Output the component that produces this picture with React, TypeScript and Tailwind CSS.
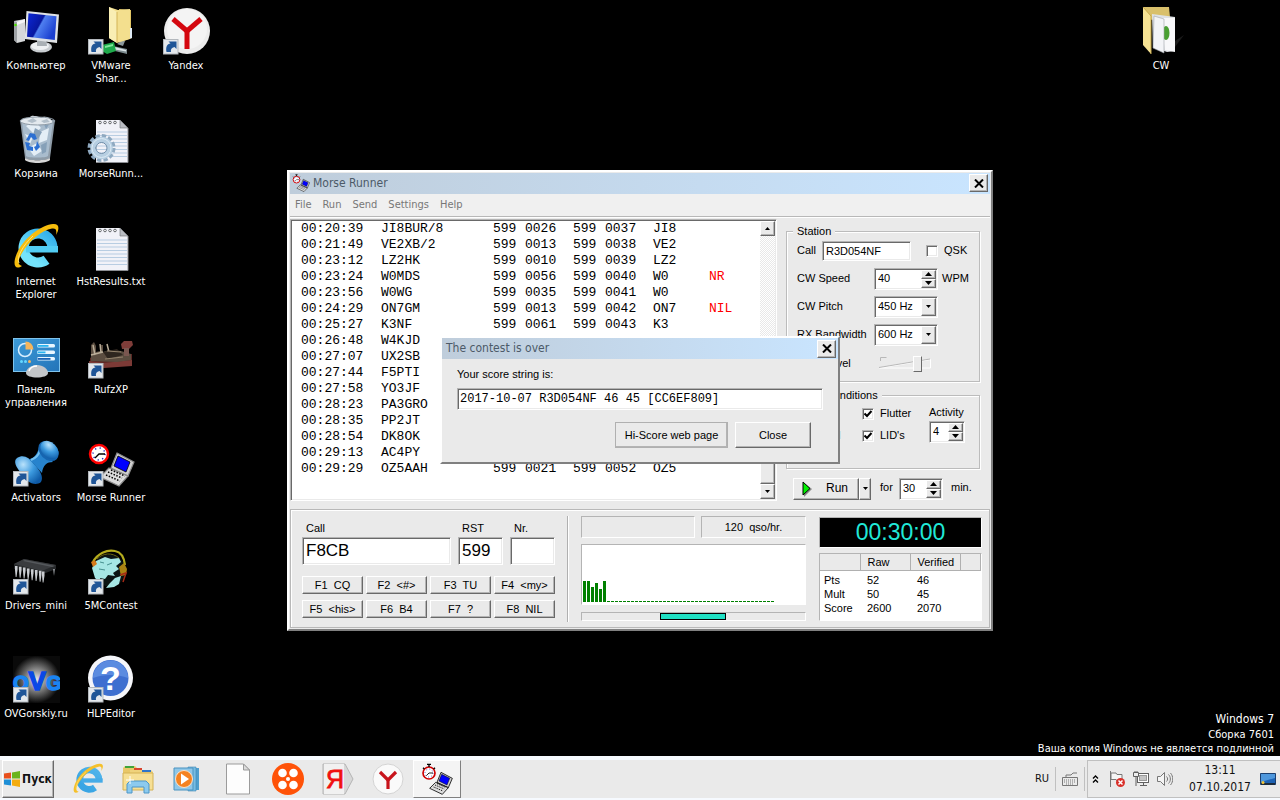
import React, { useState } from 'react';

const uiFont = "font-['DejaVu_Sans_Condensed','Noto_Sans',sans-serif]";
const sans = "font-['Liberation_Sans',Arial,sans-serif]";
const mono = "font-['Liberation_Mono','Courier_New',monospace]";

const raised = 'border border-t-white border-l-white border-r-[#696969] border-b-[#696969] bg-[#eaeaea] shadow-[inset_-1px_-1px_0_#b4b4b4]';
const sunken = 'border border-t-[#b4b4b4] border-l-[#b4b4b4] border-r-white border-b-white';
const field = `${sunken} bg-white shadow-[inset_1px_1px_0_#696969,inset_-1px_-1px_0_#eaeaea]`;

/* ---------- desktop icons ---------- */

const Shortcut = () => (
    <g>
        <rect x="1.500" y="32.500" width="14.500" height="14.500" fill="#e4e8ec" stroke="#b3b8bd" />
        <path d="M4.500 45c-1-5 .5-8 4-8.500L6.500 34.500h8v7.500l-2-2c-3 .6-4 2.500-3.500 5z" fill="#1f5597" />
    </g>
);

const ComputerIcon = () => (
    <svg viewBox="0 0 48 48" className="h-12 w-12">
        <defs>
            <linearGradient id="scr" x1="0" y1="0" x2="1" y2="0.5">
                <stop offset="0" stopColor="#0d28d8" /><stop offset="0.5" stopColor="#0717a0" />
                <stop offset="0.55" stopColor="#4f7ff0" /><stop offset="1" stopColor="#1b3fd0" />
            </linearGradient>
        </defs>
        <path d="M2 14l11-2v22l-8 2-3-3z" fill="#d6d8da" />
        <path d="M2 14l3 1v21l-3-3z" fill="#9ea2a6" />
        <path d="M5 15l8-3v3l-8 3z" fill="#f6f6f6" />
        <circle cx="3.500" cy="18" r="1.300" fill="#4be000" />
        <ellipse cx="29" cy="40" rx="11" ry="5.500" fill="#c9cdd1" />
        <ellipse cx="28" cy="39" rx="9" ry="4" fill="#eef0f2" />
        <path d="M25 32h9l1 7h-10z" fill="#aab0b5" />
        <path d="M14.500 4L47 7.500 45 36 12.700 32z" fill="#dfe2e5" />
        <path d="M16.500 6.300L44.500 9.300 42.800 33 15 29.800z" fill="url(#scr)" />
    </svg>
);

const NetFolderIcon = () => (
    <svg viewBox="0 0 48 48" className="h-12 w-12">
        <path d="M30 37l4-3h4l-2 5z" fill="#8b979b" />
        <path d="M26 39l14 3v5l-12-3z" fill="#7d8b8f" />
        <path d="M28 40l11 3v1.500l-11-2z" fill="#dbe4e7" />
        <path d="M15 38l12-3 2 9-9 3-5-3z" fill="#1faa4c" />
        <path d="M18 39l8-2v2l-8 2z" fill="#82e89c" />
        <path d="M32 2l12 1v19l1 2v7l-9 3z" fill="#e3c765" />
        <path d="M42 21h3v10l-3 1z" fill="#dfeaf5" />
        <path d="M22 0l9 3 12-1v30l-13 4-8-5z" fill="#f3df8e" />
        <path d="M22 0l8 5v31l-8-5z" fill="#f9eeb4" />
        <path d="M30 5v31" stroke="#d3b457" />
        <Shortcut />
    </svg>
);

const YandexIcon = () => (
    <svg viewBox="0 0 48 48" className="h-12 w-12">
        <circle cx="25" cy="24" r="23" fill="#ececec" />
        <circle cx="25" cy="22" r="20" fill="#f4f4f4" />
        <g stroke="#d4070f" strokeWidth="5">
            <line x1="11" y1="12" x2="25" y2="24" />
            <line x1="39" y1="12" x2="25" y2="24" />
            <line x1="25" y1="22" x2="25" y2="42" />
        </g>
        <Shortcut />
    </svg>
);

const BinIcon = () => (
    <svg viewBox="0 0 48 48" className="h-12 w-12">
        <path d="M8 5h35l-5 38c-1 3-24 3-25 0z" fill="#8f9ca8" />
        <path d="M10 7h31l-5 34c-2 2-20 2-22 0z" fill="#a9bccd" />
        <path d="M14 11l9-5 6 7-7 6zM28 17l9-4-2 12-8 3zM16 33l9-5 5 8-8 5zM13 19l8 3-3 7z" fill="#e4eef6" />
        <path d="M23 13l7 4-4 7-5-4zM29 30l6-3-1 10-4 2zM31 7l7 1-4 6z" fill="#86a0b8" />
        <path d="M9 6c2-5 7-2 9-4s4-1 6-1 3 2 7 1 7 1 9 4-5 4-15 4S8 9 9 6z" fill="#e3e9ee" />
        <path d="M15 6l6-3 4 3-5 2zM29 6l6-2 3 3-6 1z" fill="#b2bfca" />
        <ellipse cx="25.500" cy="6" rx="17.500" ry="4" fill="none" stroke="#8d99a4" />
        <path d="M14 25l4-7 5 1 2 5-3 1-3-3-2 4zM13 27l5 1-1 3 4 1v4l-6-1zM25 26l3 6-4 4-2-4 2-1z" fill="#2b6fd2" />
        <path d="M13 43c4 3 21 3 25 0v2c-4 4-21 4-25 0z" fill="#d6d6d6" />
    </svg>
);

const Sheet = () => (
    <g>
        <path d="M9 5h24l8 8v35H9z" fill="#f1f2f8" />
        <path d="M9 47.500h32V13" fill="none" stroke="#8b8d92" />
        <path d="M33 5v8h8z" fill="#b9bcc2" stroke="#6d7074" strokeWidth="0.600" />
        {[17, 20.5, 24, 27.5, 31, 34.5, 38, 41.5].map(y => <line key={y} x1="10" x2="40" y1={y} y2={y} stroke="#a9c3dc" strokeWidth="0.800" />)}
        {[13, 18, 23, 28].map(x => <circle key={x} cx={x} cy="7.500" r="1.300" fill="#fff" stroke="#44474b" strokeWidth="0.800" />)}
    </g>
);

const TextIcon = () => <svg viewBox="0 0 48 48" className="h-12 w-12"><Sheet /></svg>;

const ConfigIcon = () => (
    <svg viewBox="0 0 48 48" className="h-12 w-12">
        <Sheet />
        <circle cx="14.500" cy="33" r="12" fill="none" stroke="#8fa9c0" strokeWidth="4" strokeDasharray="4.200 2.080" />
        <circle cx="14.500" cy="33" r="8.500" fill="none" stroke="#b7cfe2" strokeWidth="5.500" />
        <circle cx="14.500" cy="33" r="5.500" fill="none" stroke="#6f8da8" />
        <circle cx="14.500" cy="33" r="9.500" fill="none" stroke="#dceaf4" />
    </svg>
);

const IeLogo = ({ size, light }: { size: string; light?: boolean }) => (
    <svg viewBox="0 0 48 48" className={size}>
        <defs>
            <linearGradient id={light ? 'ieb' : 'iea'} x1="0" y1="0" x2="0.300" y2="1">
                <stop offset="0" stopColor={light ? '#4fb3ea' : '#35b1ea'} />
                <stop offset="1" stopColor={light ? '#3aa5e4' : '#74e4fc'} />
            </linearGradient>
        </defs>
        <circle cx="26" cy="25" r="14.500" fill="none" stroke={`url(#${light ? 'ieb' : 'iea'})`} strokeWidth="10" strokeDasharray="77.500 13.600" transform="rotate(54 26 25)" />
        <rect x="14" y="23" width="32" height="6.500" fill={light ? '#45abe7' : '#52cdf4'} />
        <path d="M10 43C2 48 0 40 6 28 14 13 30 2 41 1c6-.5 7 4 3 11 1-5 0-7-4-6.500C30 7 17 18 10 30c-4 7-5 12 0 13z" fill={light ? '#f5c02a' : '#f7bd0c'} />
        <path d="M7 40C4 35 11 22 21 13" fill="none" stroke="#ffe478" strokeWidth="1" />
    </svg>
);

const PanelIcon = () => (
    <svg viewBox="0 0 48 48" className="h-12 w-12">
        <defs>
            <linearGradient id="pnl" x1="0" y1="0" x2="1" y2="1">
                <stop offset="0" stopColor="#3c9bd9" /><stop offset="1" stopColor="#2374b8" />
            </linearGradient>
        </defs>
        <rect x="1.500" y="7.500" width="46" height="33" fill="url(#pnl)" stroke="#7fc3ec" />
        <circle cx="13" cy="19" r="6.500" fill="none" stroke="#d8efff" strokeWidth="1.500" />
        <path d="M13.500 18.500V10.500a8 8 0 018 8z" fill="#f5b55c" />
        <g>
            <rect x="25" y="13" width="18" height="3.600" rx="1.500" fill="#e8f6ff" /><rect x="25.500" y="14" width="11" height="1.800" fill="#29b4f0" />
            <rect x="25" y="19.500" width="18" height="3.600" rx="1.500" fill="#e8f6ff" /><rect x="25.500" y="20.500" width="8" height="1.800" fill="#29b4f0" />
            <rect x="25" y="26" width="18" height="3.600" rx="1.500" fill="#e8f6ff" /><rect x="25.500" y="27" width="13" height="1.800" fill="#1a63b5" />
        </g>
        <circle cx="9.500" cy="30.500" r="1.500" fill="#65d8ff" /><circle cx="13.500" cy="30.500" r="1.500" fill="#65d8ff" /><circle cx="17.500" cy="30.500" r="1.500" fill="#f5b55c" />
        <path d="M14 42c0-4 5-8 11-8s11 4 11 8c0 6-22 6-22 0z" fill="#c3c6c9" />
        <path d="M17 40c1-3 4-5 8-5" fill="none" stroke="#fff" strokeWidth="1.500" />
    </svg>
);

const KeyerIcon = () => (
    <svg viewBox="0 0 48 48" className="h-12 w-12">
        <path d="M3 27l6-4h36v9l-28 3L3 32z" fill="#5b2724" />
        <path d="M2 30l15 2 28-3v6l-28 2-15-2z" fill="#7c3a36" />
        <path d="M4 14l3-3 2 4v6l4-1v-6h3v7l6-2 12 1 10 3v6l-14 2-26-1z" fill="#5b4d40" />
        <path d="M6 14l2 10M13 13l1 9M20 13l2 8M4 24l12-3" stroke="#b9ad98" strokeWidth="1.500" fill="none" />
        <path d="M16 21l14-3 6 6-15 4z" fill="#2e261f" />
        <path d="M20 20l14 1M18 28l18-2" stroke="#94846d" />
        <path d="M34 13l3-3h8l1 4-4 4h-7z" fill="#7f3d39" />
        <path d="M37 17h5v8h-5z" fill="#7a5750" />
        <Shortcut />
    </svg>
);

const PinIcon = () => (
    <svg viewBox="0 0 48 48" className="h-12 w-12">
        <defs>
            <radialGradient id="pin" cx="0.300" cy="0.300" r="0.800">
                <stop offset="0" stopColor="#b9e2fb" /><stop offset="0.500" stopColor="#3d9be0" /><stop offset="1" stopColor="#0e5aa6" />
            </radialGradient>
        </defs>
        <path d="M5 19c6-4 12-1 17 6 6 6 10 13 7 18-6 5-15 0-20-9C4 28 1 22 5 19z" fill="url(#pin)" />
        <path d="M17 20c5 0 9-6 10-12l14 15c-6 0-10 3-11 11z" fill="#2783cd" />
        <path d="M19 21c5-2 8-5 9-10" stroke="#72bff0" strokeWidth="2" fill="none" />
        <ellipse cx="36.500" cy="12" rx="11.500" ry="8.500" transform="rotate(45 36.500 12)" fill="#1665b0" />
        <ellipse cx="37.500" cy="11" rx="10.500" ry="7.500" transform="rotate(45 37.500 11)" fill="url(#pin)" />
        <Shortcut />
    </svg>
);

const RunnerArt = ({ black }: { black?: boolean }) => (
    <g>
        <path d="M30 14l17 9-6 14-17-8z" fill="#cfcfcf" stroke={black ? '#000' : '#8a8a8a'} strokeWidth="1.200" />
        <path d="M31 17l12 6-4 10-12-6z" fill="#0000ff" stroke="#000" strokeWidth="0.800" />
        <path d="M22 29l19 8-9 10-19-9z" fill="#dcdcdc" stroke={black ? '#000' : '#8a8a8a'} strokeWidth="1.200" />
        <path d="M21 33l14 6M19 36l14 6M24 31l14 6" stroke="#000" strokeWidth="1.500" strokeDasharray="1.500 1.500" />
        <circle cx="12" cy="15" r="9" fill="#fff" stroke={black ? '#d00000' : '#ff0000'} strokeWidth="2.500" />
        <circle cx="12" cy="15" r="6" fill="none" stroke="#3030c0" strokeWidth="1.500" strokeDasharray="1.200 3.500" />
        <path d="M18 15h-6l-4 4" stroke="#000" strokeWidth="1.300" fill="none" />
        {black && <path d="M12 6V2M9 2h6M3 7l2 2M21 7l-2 2" stroke="#000" strokeWidth="2" fill="none" />}
    </g>
);

const RunnerIcon = () => <svg viewBox="0 0 48 48" className="h-12 w-12"><RunnerArt /><Shortcut /></svg>;

const ChipIcon = () => (
    <svg viewBox="0 0 48 48" className="h-12 w-12">
        <path d="M12 12l32 6v4L31 27 2 22v-5z" fill="#26282a" />
        <path d="M12 12l32 6-14 6L2 17z" fill="#3a3c3f" />
        <path d="M13 13l30 6-3 1-29-6z" fill="#55585c" />
        {[3, 7, 11, 15, 19, 23, 27, 30].map((x, i) => (
            <path key={x} d={`M${x} ${19 + i * 0.8}h2.500v4l-1 7h-.8l-.7-7z`} fill="#c9ccd0" />
        ))}
        <path d="M41 22h2l-1 7z" fill="#8e9195" />
        <Shortcut />
    </svg>
);

const GlobeIcon = () => (
    <svg viewBox="0 0 48 48" className="h-12 w-12">
        <path d="M7 20c1-8 9-13 17-12 9 1 15 7 14 17-1 9-7 14-13 15-9 1-18-8-18-20z" fill="#0b1414" />
        <path d="M5 21l4-7 9-4 6 2 8-1 2 4-5 4 3 3-6 4 2 3-7-1-3 4-5-1 2 6-7-6zM28 31l6-2-2 8-5 3-8 1 4-5z" fill="#a6e6e4" />
        <path d="M13 15l4 1M20 18l5-2M12 22l6 1" stroke="#47908f" />
        <path d="M6 15C10 7 20 2 28 4c6 1 9 6 10 14" fill="none" stroke="#b4ab1d" strokeWidth="2.200" />
        <path d="M10 12C16 6 25 5 32 11" fill="none" stroke="#6b6614" strokeWidth="1" />
        <path d="M4 15l4-2 2 4-4 3z" fill="#d67a1c" />
        <path d="M32 20l5-4 3 6-1 6-5 1z" fill="#a98213" />
        <path d="M33 28l6-2-3 9" stroke="#a62a16" strokeWidth="1.500" fill="none" />
        <Shortcut />
    </svg>
);

const OvgIcon = () => (
    <svg viewBox="0 0 48 48" className="h-12 w-12">
        <defs>
            <radialGradient id="glow"><stop offset="0" stopColor="#e8e8e8" /><stop offset="1" stopColor="#0a0a0a" /></radialGradient>
        </defs>
        <rect x="1" y="1" width="47" height="47" fill="url(#glow)" />
        <text x="1" y="35" fontSize="20" fill="#1a84f2" stroke="#1a84f2" strokeWidth="1.500" className="font-['Liberation_Sans',sans-serif] font-bold">
            O<tspan fontSize="26" fill="#0a48e6" stroke="#0a48e6">V</tspan>G
        </text>
        <Shortcut />
    </svg>
);

const HelpIcon = () => (
    <svg viewBox="0 0 48 48" className="h-12 w-12">
        <circle cx="23.500" cy="23" r="22.500" fill="#f5f6fa" />
        <circle cx="23.500" cy="23" r="18" fill="#3e6fd0" />
        <path d="M6 23a17.500 17.500 0 0135 0c-10-4-25-4-35 0z" fill="#5b8be0" />
        <text x="23.500" y="35" textAnchor="middle" fontSize="34" fill="#fff" className="font-['Liberation_Sans',sans-serif] font-bold">?</text>
        <Shortcut />
    </svg>
);

const CwFolderIcon = () => (
    <svg viewBox="-5 0 48 48" className="h-12 w-12">
        <path d="M33 34l9-6-9 12z" fill="#1b1b1b" />
        <path d="M1 0h26l1 10-20 3z" fill="#d9c06b" />
        <path d="M10 7l23 3v34l-8 1-14-5z" fill="#dfe2e6" />
        <path d="M18 11l15 0v34l-10-2z" fill="#f8f8fa" />
        <ellipse cx="24" cy="26" rx="3.500" ry="7" fill="#4aa032" />
        <path d="M12 9l10 3v34l-11-5z" fill="#f3f4f7" stroke="#9da2a8" strokeWidth="0.600" />
        <path d="M1 0l8 9v38l-8-9z" fill="#f7e394" />
        <path d="M1 0l8 9v38" fill="none" stroke="#c7a94c" />
    </svg>
);

interface DesktopItem { label: string; icon: React.ReactNode }

const columns: DesktopItem[][] = [
    [
        { label: 'Компьютер', icon: <ComputerIcon /> },
        { label: 'Корзина', icon: <BinIcon /> },
        { label: 'Internet Explorer', icon: <IeLogo size="h-12 w-12" /> },
        { label: 'Панель управления', icon: <PanelIcon /> },
        { label: 'Activators', icon: <PinIcon /> },
        { label: 'Drivers_mini', icon: <ChipIcon /> },
        { label: 'OVGorskiy.ru', icon: <OvgIcon /> },
    ],
    [
        { label: 'VMware Shar...', icon: <NetFolderIcon /> },
        { label: 'MorseRunn...', icon: <ConfigIcon /> },
        { label: 'HstResults.txt', icon: <TextIcon /> },
        { label: 'RufzXP', icon: <KeyerIcon /> },
        { label: 'Morse Runner', icon: <RunnerIcon /> },
        { label: '5MContest', icon: <GlobeIcon /> },
        { label: 'HLPEditor', icon: <HelpIcon /> },
    ],
    [{ label: 'Yandex', icon: <YandexIcon /> }],
];

const DesktopIcon = ({ label, icon }: DesktopItem) => (
    <button className="flex h-[108px] w-[72px] flex-col items-center gap-1 text-center text-[11px] leading-[13px] text-white last:h-auto">
        {icon}
        <span>{label}</span>
    </button>
);

/* ---------- classic controls ---------- */

const CloseButton = ({ onClick }: { onClick?: () => void }) => (
    <button aria-label="Close window" onClick={onClick} className={`flex h-[18px] w-[19px] items-center justify-center ${raised}`}>
        <svg viewBox="0 0 10 9" className="h-[9px] w-[10px]" stroke="#000" strokeWidth="2"><path d="M1 0.500l8 8M9 0.500l-8 8" /></svg>
    </button>
);

const Arrow = ({ up }: { up?: boolean }) => (
    <svg viewBox="0 0 7 4" className="h-1 w-[7px]"><path d={up ? 'M0 4h7L3.500 0z' : 'M0 0h7L3.500 4z'} /></svg>
);

const SmallArrow = ({ up }: { up?: boolean }) => (
    <svg viewBox="0 0 5 3" className="h-[3px] w-[5px]"><path d={up ? 'M0 3h5L2.500 0z' : 'M0 0h5L2.500 3z'} /></svg>
);

const Spin = ({ id, value, width }: { id: string; value: string; width: string }) => (
    <div className={`flex h-[22px] p-px ${width} ${field}`}>
        <input id={id} defaultValue={value} className="w-0 flex-1 bg-transparent pl-0.5 outline-none" />
        <div className="flex w-[15px] flex-col">
            <button aria-label="Increase" className={`flex flex-1 items-center justify-center ${raised}`}><Arrow up /></button>
            <button aria-label="Decrease" className={`flex flex-1 items-center justify-center ${raised}`}><Arrow /></button>
        </div>
    </div>
);

const Combo = ({ id, value }: { id: string; value: string }) => (
    <div className={`relative h-[22px] w-16 p-px ${field}`}>
        <select id={id} className="h-full w-full appearance-none bg-transparent pl-0.5 outline-none">
            <option>{value}</option>
        </select>
        <span className={`pointer-events-none absolute inset-y-px right-px flex w-[15px] items-center justify-center ${raised}`}><SmallArrow /></span>
    </div>
);

const Check = ({ label, checked }: { label: string; checked?: boolean }) => {
    const [on, setOn] = useState(!!checked);
    return (
        <label className="flex h-[22px] items-center gap-1.5">
            <span className={`relative flex h-3 w-3 items-center justify-center ${field}`}>
                <input type="checkbox" checked={on} onChange={() => setOn(!on)} className="absolute inset-0 appearance-none" />
                {on && <svg viewBox="0 0 8 8" className="h-2 w-2" fill="none" stroke="#000" strokeWidth="2"><path d="M0.500 3.500l2.500 2.500 4.500-5" /></svg>}
            </span>
            {label}
        </label>
    );
};

const Group = ({ title, className, children }: { title: string; className: string; children: React.ReactNode }) => (
    <fieldset className={`border border-[#bcbcbc] px-2.5 shadow-[1px_1px_0_#fff,inset_1px_1px_0_#fff] ${className}`}>
        <legend className="-ml-1 bg-[#eaeaea] px-1 leading-[13px]">{title}</legend>
        {children}
    </fieldset>
);

/* ---------- Morse Runner window ---------- */

const log: string[][] = [
    ['00:20:39', 'JI8BUR/8', '599', '0026', '599', '0037', 'JI8', ''],
    ['00:21:49', 'VE2XB/2', '599', '0013', '599', '0038', 'VE2', ''],
    ['00:23:12', 'LZ2HK', '599', '0010', '599', '0039', 'LZ2', ''],
    ['00:23:24', 'W0MDS', '599', '0056', '599', '0040', 'W0', 'NR'],
    ['00:23:56', 'W0WG', '599', '0035', '599', '0041', 'W0', ''],
    ['00:24:29', 'ON7GM', '599', '0013', '599', '0042', 'ON7', 'NIL'],
    ['00:25:27', 'K3NF', '599', '0061', '599', '0043', 'K3', ''],
    ['00:26:48', 'W4KJD', '', '', '', '', '', ''],
    ['00:27:07', 'UX2SB', '', '', '', '', '', ''],
    ['00:27:44', 'F5PTI', '', '', '', '', '', ''],
    ['00:27:58', 'YO3JF', '', '', '', '', '', ''],
    ['00:28:23', 'PA3GRO', '', '', '', '', '', ''],
    ['00:28:35', 'PP2JT', '', '', '', '', '', ''],
    ['00:28:54', 'DK8OK', '', '', '', '', '', ''],
    ['00:29:13', 'AC4PY', '', '', '', '', '', ''],
    ['00:29:29', 'OZ5AAH', '599', '0021', '599', '0052', 'OZ5', ''],
];

const LogView = () => (
    <div className={`flex w-[487px] p-px ${field}`}>
        <div className={`flex-1 overflow-hidden pl-[9px] ${mono}`}>
            <table className="w-full table-fixed text-[13px] leading-4 text-black">
                <colgroup>
                    <col className="w-20" /><col className="w-28" /><col className="w-8" /><col className="w-12" />
                    <col className="w-8" /><col className="w-12" /><col className="w-14" /><col />
                </colgroup>
                <tbody>
                    {log.map(row => (
                        <tr key={row[0]} className="h-4">
                            {row.map((cell, i) => <td key={i} className={i === 7 ? 'p-0 text-[#ff0000]' : 'p-0'}>{cell}</td>)}
                        </tr>
                    ))}
                </tbody>
            </table>
        </div>
        <div className="flex w-[15px] flex-col bg-[#f2f2f2] bg-[repeating-conic-gradient(#fff_0_25%,#e8e8e8_0_50%)] bg-[length:2px_2px]">
            <button aria-label="Scroll up" className={`flex h-[15px] items-center justify-center ${raised}`}><SmallArrow up /></button>
            <div className="flex-1" />
            <div className={`h-[130px] ${raised}`} />
            <button aria-label="Scroll down" className={`flex h-[15px] items-center justify-center ${raised}`}><SmallArrow /></button>
        </div>
    </div>
);

const Station = () => (
    <Group title="Station" className="h-[157px]">
        <div className="grid gap-y-1.5 pt-0.5">
            <div className="flex items-center">
                <label htmlFor="mycall" className="w-[25px]">Call</label>
                <input id="mycall" defaultValue="R3D054NF" className={`mr-[15px] h-5 w-[89px] pl-[3px] outline-none ${field}`} />
                <Check label="QSK" />
            </div>
            <div className="flex items-center">
                <label htmlFor="speed" className="w-[77px]">CW Speed</label>
                <Spin id="speed" value="40" width="w-16" />
                <span className="pl-1">WPM</span>
            </div>
            <div className="flex items-center">
                <label htmlFor="pitch" className="w-[77px]">CW Pitch</label>
                <Combo id="pitch" value="450 Hz" />
            </div>
            <div className="flex items-center">
                <label htmlFor="bw" className="w-[77px]">RX Bandwidth</label>
                <Combo id="bw" value="600 Hz" />
            </div>
            <div className="flex h-6 items-center">
                <label htmlFor="mon" className="w-[82px]">Mon. Level</label>
                <div className="relative h-4 w-[52px]">
                    <svg viewBox="0 0 52 16" className="h-4 w-[52px]" fill="none" stroke="#b8b8b8">
                        <path d="M0.500 12l51-8.500v8.500z" stroke="#fff" /><path d="M0 11.500L51 3" /><path d="M1.500 5V1.500h6" />
                    </svg>
                    <input id="mon" type="range" defaultValue="78" className="absolute inset-0 w-full appearance-none bg-transparent [&::-webkit-slider-thumb]:h-4 [&::-webkit-slider-thumb]:w-[9px] [&::-webkit-slider-thumb]:appearance-none [&::-webkit-slider-thumb]:border [&::-webkit-slider-thumb]:border-t-white [&::-webkit-slider-thumb]:border-l-white [&::-webkit-slider-thumb]:border-r-[#696969] [&::-webkit-slider-thumb]:border-b-[#696969] [&::-webkit-slider-thumb]:bg-[#eaeaea]" />
                </div>
            </div>
        </div>
    </Group>
);

const Conditions = () => (
    <Group title="Band Conditions" className="h-20">
        <div className="flex pt-px">
            <div className="w-[65px]"><Check label="QSB" /><Check label="QRM" /></div>
            <div className="w-[67px]"><Check label="Flutter" checked /><Check label="LID's" checked /></div>
            <div>
                <label htmlFor="act" className="block h-[18px] leading-[18px]">Activity</label>
                <Spin id="act" value="4" width="w-9" />
            </div>
        </div>
    </Group>
);

const RunRow = () => (
    <div className="flex h-[22px] items-center">
        <button className={`ml-[7px] flex h-[22px] w-[66px] items-center ${raised}`}>
            <svg viewBox="0 0 10 16" className="ml-2 h-4 w-[10px]"><path d="M2 2v14l8-8z" fill="#888" /><path d="M1 1v13l7-6.500z" fill="#00f000" stroke="#000" /></svg>
            <span className="pl-3.5 text-[12px]">Run</span>
        </button>
        <button aria-label="Run mode" className={`flex h-[22px] w-3 items-center justify-center ${raised}`}><SmallArrow /></button>
        <label htmlFor="dur" className="w-[28px] pl-[9px] pb-0.5">for</label>
        <Spin id="dur" value="30" width="w-11" />
        <span className="pl-2 pb-0.5">min.</span>
    </div>
);

const EntryPanel = () => (
    <div className="w-[253px]">
        <div className="flex gap-[7px] text-[11px]">
            <label htmlFor="hiscall" className="w-[149px] pl-1">Call</label>
            <label htmlFor="rst" className="w-[45px] pl-1">RST</label>
            <label htmlFor="nr" className="pl-1">Nr.</label>
        </div>
        <div className="mt-0.5 flex gap-[7px] text-[17px] leading-5">
            <input id="hiscall" defaultValue="F8CB" className={`h-7 w-[149px] pl-[3px] outline-none ${field}`} />
            <input id="rst" defaultValue="599" className={`h-7 w-[45px] pl-[3px] outline-none ${field}`} />
            <input id="nr" className={`h-7 w-[45px] pl-[3px] outline-none ${field}`} />
        </div>
        <div className="mt-[11px] grid grid-cols-4 gap-x-[3px] gap-y-1.5">
            {['F1  CQ', 'F2  <#>', 'F3  TU', 'F4  <my>', 'F5  <his>', 'F6  B4', 'F7  ?', 'F8  NIL'].map(k => (
                <button key={k} className={`h-[18px] whitespace-pre leading-4 ${raised}`}>{k}</button>
            ))}
        </div>
    </div>
);

const rates = [21, 21, 15, 19, 13, 21];

const RatePanel = () => (
    <div className="flex w-[225px] flex-col">
        <div className="flex gap-1.5">
            <div className={`h-[22px] w-[114px] ${sunken}`} />
            <div className={`h-[22px] flex-1 whitespace-pre text-center leading-5 ${sunken}`}>120  qso/hr.</div>
        </div>
        <div className={`mt-1.5 flex h-[61px] items-end gap-px bg-white pb-0.5 pl-px ${sunken}`}>
            {rates.map((h, i) => <div key={i} className="w-[3px] bg-[#008000]" style={{ height: h }} />)}
            {Array.from({ length: 42 }, (_, i) => <div key={i} className="h-px w-[3px] bg-[#008000]" />)}
        </div>
        <div className={`mt-[7px] flex h-[9px] pl-[78px] ${sunken}`}>
            <div className="h-[7px] w-[66px] border border-black bg-[#20e0c4]" />
        </div>
    </div>
);

const ScorePanel = () => (
    <div className="w-[163px]">
        <div className={`mt-px h-[31px] bg-black text-center text-[23px] leading-[29px] text-[#20e8d8] ${sunken}`}>00:30:00</div>
        <div className={`mt-[5px] h-[68px] bg-white ${sunken}`}>
            <table className="w-full table-fixed text-left">
                <colgroup><col className="w-10" /><col className="w-[50px]" /><col className="w-[50px]" /><col /></colgroup>
                <thead>
                    <tr className="h-[17px] bg-[#eaeaea]">
                        {['', 'Raw', 'Verified', ''].map((h, i) => <th key={i} className="border-r border-b border-[#b0b0b0] p-0 pl-[7px] font-normal leading-4">{h}</th>)}
                    </tr>
                </thead>
                <tbody>
                    {[['Pts', '52', '46'], ['Mult', '50', '45'], ['Score', '2600', '2070']].map(r => (
                        <tr key={r[0]} className="leading-[14px] first:*:pt-0.5">
                            <td className="p-0 pl-1">{r[0]}</td><td className="p-0 pl-[7px]">{r[1]}</td><td className="p-0 pl-[7px]">{r[2]}</td>
                        </tr>
                    ))}
                </tbody>
            </table>
        </div>
    </div>
);

const frame = 'border-2 border-t-white border-l-white border-r-[#808080] border-b-[#808080] bg-[#eaeaea]';
const titleBar = `flex h-[21px] items-center bg-linear-to-r from-[#bfcddb] to-[#c9e5ff] pr-0.5 text-[12px] text-[#4c5a68] ${uiFont}`;

const MorseRunner = () => (
    <section className={`w-[706px] p-px text-[11px] leading-[13px] text-black ${frame} ${sans}`}>
        <header className={`pl-0.5 ${titleBar}`}>
            <svg viewBox="0 0 48 48" className="h-[18px] w-[18px]"><RunnerArt black /></svg>
            <h1 className="flex-1 pl-[3px]">Morse Runner</h1>
            <CloseButton />
        </header>
        <nav className={`flex h-[23px] items-center gap-[11px] border-b border-[#b8b8b8] bg-[#f0f0f0] pl-[5px] text-[11px] text-[#777] ${uiFont}`}>
            {['File', 'Run', 'Send', 'Settings', 'Help'].map(m => <button key={m}>{m}</button>)}
        </nav>
        <div className="flex justify-between border-t border-white pt-px">
            <LogView />
            <div className="mr-2.5 flex w-[194px] flex-col pt-1.5 pb-px">
                <Station />
                <div className="h-[7px]" />
                <Conditions />
                <div className="h-[9px]" />
                <RunRow />
            </div>
        </div>
        <div className="mt-2 flex items-start border border-[#b8b8b8] pt-1.5 pr-[7px] pb-[5px] pl-[11px] shadow-[inset_1px_1px_0_#fff]">
            <div className="pt-1.5"><EntryPanel /></div>
            <div className="mx-3 h-[106px] w-0.5 border-r border-l border-l-[#b0b0b0] border-r-white" />
            <RatePanel />
            <div className="ml-auto"><ScorePanel /></div>
        </div>
    </section>
);

const ScoreDialog = () => {
    const [open, setOpen] = useState(true);
    if (!open) return null;
    return (
        <section role="dialog" aria-label="The contest is over" className={`z-10 w-[400px] text-[11px] leading-[13px] text-black ${frame} ${sans}`}>
            <header className={`pl-1 ${titleBar}`}>
                <h2 className="flex-1">The contest is over</h2>
                <CloseButton onClick={() => setOpen(false)} />
            </header>
            <div className="px-[15px] pt-[9px] pb-3.5">
                <label htmlFor="score">Your score string is:</label>
                <input id="score" readOnly value="2017-10-07 R3D054NF 46 45 [CC6EF809]" className={`mt-[7px] h-[22px] w-full pl-0.5 text-[12px] outline-none ${mono} ${field}`} />
                <div className="mt-3 flex justify-end gap-[7px] pr-3">
                    <button className={`h-[26px] w-[113px] outline outline-1 -outline-offset-1 outline-[#b0b0b0] ${raised}`}>Hi-Score web page</button>
                    <button onClick={() => setOpen(false)} className={`h-[26px] w-[76px] ${raised}`}>Close</button>
                </div>
            </div>
        </section>
    );
};

/* ---------- taskbar ---------- */

const FlagLogo = () => (
    <svg viewBox="0 0 16 16" className="h-4 w-4">
        <path d="M0 2.500L7 1.500v6H0z" fill="#e8501e" /><path d="M8 1.500L16 0v7.500H8z" fill="#6ab41c" />
        <path d="M0 8.500h7v6L0 13.500z" fill="#1f8fd6" /><path d="M8 8.500h8V16l-8-1.500z" fill="#f3ac10" />
    </svg>
);

const ExplorerIcon = () => (
    <svg viewBox="0 0 32 32" className="h-8 w-8">
        <path d="M1 5l2-2h10l2 2v22H1z" fill="#e8c768" /><path d="M3 3h9v2H3z" fill="#3fa33a" />
        <path d="M8 7h10l2 2v18H8z" fill="#efd27b" /><path d="M12 5h8v2h-8z" fill="#d8442e" />
        <path d="M18 7h11l2 2v18H18z" fill="#efd27b" /><path d="M20 7h9v2h-9z" fill="#2f75c9" />
        <path d="M1 10h30v17H1z" fill="#f6df94" stroke="#d4b254" />
        <path d="M5 30V21l3-3h16l3 3v9h-5v-6H10v6z" fill="#8ccaee" stroke="#4c96c8" />
        <path d="M8 13v8M4 17h8" stroke="#fff" />
    </svg>
);

const MediaIcon = () => (
    <svg viewBox="0 0 32 32" className="h-8 w-8">
        <path d="M19 5h8v22h-8z" fill="#4f9fce" /><path d="M16 4h8v24h-8z" fill="#78bce2" stroke="#3c86b5" strokeWidth="0.600" />
        <path d="M2 5h19v22H2z" fill="#8fc7e8" stroke="#4b93c0" />
        <circle cx="12" cy="16" r="8.500" fill="#f58220" stroke="#fbe2c8" /><path d="M9 10.500v11l8-5.500z" fill="#fff" />
    </svg>
);

const DocIcon = () => (
    <svg viewBox="0 0 32 32" className="h-8 w-8">
        <path d="M4.500 1h17l6 6v24h-23z" fill="#fdfdfd" stroke="#9b9b9b" /><path d="M21.500 1v6h6z" fill="#dcdcdc" stroke="#9b9b9b" />
    </svg>
);

const FilmIcon = () => (
    <svg viewBox="0 0 32 32" className="h-8 w-8">
        <circle cx="16" cy="16" r="16" fill="#ff5208" />
        <g fill="#fff"><circle cx="10.500" cy="10" r="4.300" /><circle cx="21.500" cy="10" r="4.300" /><circle cx="10.500" cy="22" r="4.300" /><circle cx="21.500" cy="22" r="4.300" /><circle cx="16" cy="16" r="2" /></g>
    </svg>
);

const YaIcon = () => (
    <svg viewBox="0 0 32 32" className="h-8 w-8">
        <path d="M1 1h22l8 15-8 15H1z" fill="#d7d7d7" stroke="#b5b5b5" />
        <path d="M2 1h20v30H2z" fill="#f1f1f1" />
        <text x="4" y="25" fontSize="25" fill="#f01010" stroke="#f01010" strokeWidth="0.800" className="font-['Liberation_Sans',sans-serif]">Я</text>
    </svg>
);

const YIcon = () => (
    <svg viewBox="0 0 32 32" className="h-8 w-8">
        <circle cx="16" cy="16" r="15" fill="#fafafa" stroke="#d4d4d4" />
        <g stroke="#c8141c" strokeWidth="3.200"><line x1="8" y1="9" x2="16" y2="17" /><line x1="24" y1="9" x2="16" y2="17" /><line x1="16" y1="16" x2="16" y2="26" /></g>
    </svg>
);

const pinned = [
    { name: 'Internet Explorer', icon: <IeLogo size="h-8 w-8" light /> },
    { name: 'Проводник', icon: <ExplorerIcon /> },
    { name: 'Media Player', icon: <MediaIcon /> },
    { name: 'Документ', icon: <DocIcon /> },
    { name: 'Кино', icon: <FilmIcon /> },
    { name: 'Яндекс', icon: <YaIcon /> },
    { name: 'Yandex', icon: <YIcon /> },
];

const Taskbar = () => (
    <footer className="flex h-11 items-stretch border-t-4 border-b-2 border-[#f6faff] bg-[#eaeaea] pl-0.5 text-[#111]">
        <button className={`flex w-[52px] items-center justify-center gap-0.5 text-[12px] font-bold ${raised}`}><FlagLogo />Пуск</button>
        <div className="flex items-center gap-[18px] pl-[18px]">
            {pinned.map(p => <button key={p.name} aria-label={p.name}>{p.icon}</button>)}
        </div>
        <button aria-label="Morse Runner" className="ml-[9px] flex w-12 items-center justify-center border border-t-white border-l-white border-r-[#808080] border-b-[#808080] bg-[#f4f4f4]">
            <svg viewBox="0 0 48 48" className="h-8 w-8"><RunnerArt black /></svg>
        </button>
        <div className="ml-auto flex items-center text-[11px]">
            <span className="pr-1.5">RU</span>
            <div className="flex h-6 w-[30px] items-center justify-center border-x border-[#c0c0c0]">
                <svg viewBox="0 0 16 14" className="h-3.5 w-4" fill="none" stroke="#777"><path d="M0.500 5.500h15v8h-15zM4 5V3h5l2-2h4" /><path d="M2 8h12M2 10h12M4 12h8" strokeDasharray="1 1" /></svg>
            </div>
            <div className="ml-0.5 flex h-full items-center border border-r-0 border-[#c0c0c0] pl-1">
                <button aria-label="Показать скрытые значки">
                    <svg viewBox="0 0 7 8" className="h-2 w-[7px]" fill="none" stroke="#000" strokeWidth="1.300"><path d="M1 3.500L3.500 1 6 3.500M1 7.500L3.500 5 6 7.500" /></svg>
                </button>
                <svg viewBox="0 0 16 16" className="ml-2.5 h-4 w-4"><path d="M1.500 0v16" stroke="#777" /><path d="M2 2h5l1 1.500h5V10H8L7 8.500H2z" fill="#f5f5f5" stroke="#777" /><circle cx="11.500" cy="11.500" r="4.500" fill="#d9302a" /><path d="M9.500 9.500l4 4M13.500 9.500l-4 4" stroke="#fff" strokeWidth="1.500" /></svg>
                <svg viewBox="0 0 16 16" className="ml-2 h-4 w-4" fill="none" stroke="#606060"><rect x="4.500" y="2.500" width="11" height="9" fill="#fff" /><rect x="6.500" y="4.500" width="7" height="5" fill="#c4c4c4" stroke="#999" /><path d="M7 14.500h7M10.500 12v2" /><path d="M0.500 1.500h5v4h-5z" fill="#eee" /><path d="M3 6v9M2 0v2M4 0v2" /></svg>
                <svg viewBox="0 0 16 16" className="ml-2 h-4 w-4" fill="none" stroke="#777"><path d="M0.500 5.500h3l4-4v13l-4-4h-3z" fill="#f5f5f5" /><path d="M9.500 5.500c1.500 1.500 1.500 3.500 0 5M11.500 3.500c2.500 2.500 2.500 6.500 0 9M13.500 2c3 3.500 3 8.500 0 12" /></svg>
                <div className="ml-[15px] w-16 text-center text-[12px] leading-[17px]"><div>13:11</div><div>07.10.2017</div></div>
                <button aria-label="Свернуть все окна" className="ml-2 mr-1">
                    <svg viewBox="0 0 16 13" className="h-[13px] w-4"><path d="M0.500 0.500h15v11h-15z" fill="#1d62b4" stroke="#1b3f70" /><path d="M1 1h14v4L1 9z" fill="#4e97dc" /><path d="M1 10h14v2H1z" fill="#1d2c3c" /><circle cx="3" cy="9.500" r="1.500" fill="#f3c53a" /></svg>
                </button>
            </div>
        </div>
    </footer>
);

export default function App() {
    return (
        <main className={`relative flex min-h-screen flex-col bg-black ${uiFont}`}>
            <div className="flex flex-1 gap-[3px] pt-[7px]">
                {columns.map((col, i) => (
                    <div key={i} className="flex flex-col">
                        {col.map(item => <DesktopIcon key={item.label} {...item} />)}
                    </div>
                ))}
                <div className="ml-auto flex flex-col items-end justify-between pr-1.5">
                    <div className="pr-[77px]"><DesktopIcon label="CW" icon={<CwFolderIcon />} /></div>
                    <div className="text-right text-[11px] leading-[14px] text-white">
                        <p className="text-[12px] leading-[18px]">Windows 7</p>
                        <p>Сборка 7601</p>
                        <p>Ваша копия Windows не является подлинной</p>
                    </div>
                </div>
            </div>
            <Taskbar />
            <div className="pointer-events-none absolute inset-0 grid place-items-center *:pointer-events-auto *:col-start-1 *:row-start-1">
                <MorseRunner />
                <ScoreDialog />
            </div>
        </main>
    );
}
